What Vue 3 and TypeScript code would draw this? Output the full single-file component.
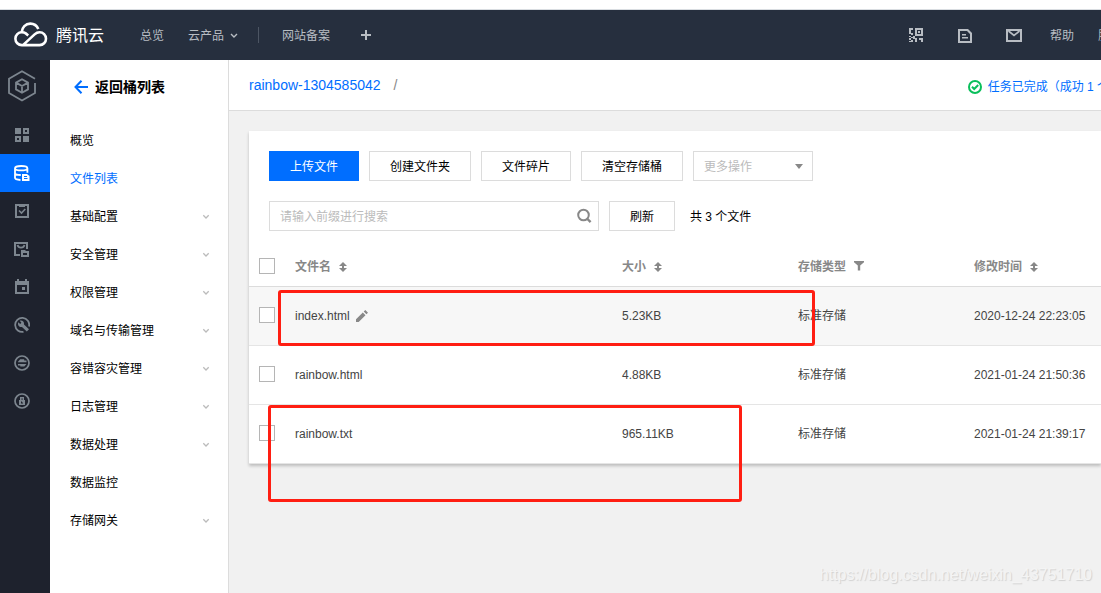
<script setup lang="ts">
import { ref } from 'vue'

interface Glyph {
  name: string
  fill?: string
  stroke?: string
  width?: number
}

interface MenuItem {
  label: string
  expandable: boolean
}

interface FileRow {
  name: string
  size: string
  type: string
  time: string
}

const railIcons: Glyph[] = [
  {
    name: '总览',
    fill: 'M1 1h6v6H1zM9 1h6v6H9zM11 3v2h2V3zM1 9h6v6H1zM3 11v2h2v-2zM9 9h6v6H9z',
  },
  {
    name: '存储桶列表',
    fill: 'M8 9h5l2.500 2v5H8zM10 11v1h3v-1zM10 13v1h3.500v-1z',
    stroke: 'M1 3.200C1 1.800 3.700 1 7.200 1s6.200.8 6.200 2.200S10.700 5.400 7.200 5.400 1 4.600 1 3.200zM1 3.200v9.600c0 1.200 2.200 2 5.500 2.200M13.400 3.200v4.600M1 8c0 1.200 2.500 2 5.800 2',
    width: 1.8,
  },
  {
    name: '任务',
    fill: 'M1 1h14v14H1zM3 3v10h10V3h-2v1H5V3z',
    stroke: 'M5 7.500l2.500 2.500 3.800-4',
    width: 1.6,
  },
  {
    name: '数据迁移',
    fill: 'M0 1h14v7h-2V3H2v10h4v2H0zM7 9h4l1 1h3v6H7zM9 12v2h4v-2z',
    stroke: 'M3.500 4c1 3.400 6 3.400 7 0',
    width: 1.8,
  },
  {
    name: '计划',
    fill: 'M3 0h2v2h6V0h2v2h2v13H1V2h2zM3 6v7h10V6zM8 8h3v3H8z',
  },
  {
    name: '工具',
    fill: 'M4.200 5.200l2 1.700 1.200-1.200L5.800 3.800c2-.8 4.800.7 4.200 3.800l5 4.600-2.200 2.400-4.800-4.600C5.500 10.600 3.300 8.400 4.200 5.200z',
    stroke: 'M9.500 14.800A7 7 0 1 1 15 9.500',
    width: 1.8,
  },
  {
    name: '传输',
    fill: 'M4 6.800L6.200 4.200h4V5.600h2.300v1.600H4zM4 9h8.500l-2.200 2.600h-4v-1.200H4z',
    stroke: 'M8 1a7 7 0 1 0 0 14A7 7 0 0 0 8 1z',
    width: 1.7,
  },
  {
    name: '授权',
    fill: 'M6 4h4v3H8.500V5.300H7.600V7H11v5H5V7h1zM7 8.500V10.500h2v-1H8v-1z',
    stroke: 'M8 1a7 7 0 1 0 0 14A7 7 0 0 0 8 1z',
    width: 1.7,
  },
]
const activeRail = 1

const menu: MenuItem[] = [
  { label: '概览', expandable: false },
  { label: '文件列表', expandable: false },
  { label: '基础配置', expandable: true },
  { label: '安全管理', expandable: true },
  { label: '权限管理', expandable: true },
  { label: '域名与传输管理', expandable: true },
  { label: '容错容灾管理', expandable: true },
  { label: '日志管理', expandable: true },
  { label: '数据处理', expandable: true },
  { label: '数据监控', expandable: false },
  { label: '存储网关', expandable: true },
]
const activeMenu = '文件列表'

const files: FileRow[] = [
  { name: 'index.html', size: '5.23KB', type: '标准存储', time: '2020-12-24 22:23:05' },
  { name: 'rainbow.html', size: '4.88KB', type: '标准存储', time: '2021-01-24 21:50:36' },
  { name: 'rainbow.txt', size: '965.11KB', type: '标准存储', time: '2021-01-24 21:39:17' },
]

const keyword = ref('')
const selected = ref<string[]>([])

function toggleAll(event: Event) {
  const on = (event.target as HTMLInputElement).checked
  selected.value = on ? files.map((f) => f.name) : []
}
</script>

<template>
  <div class="page">
    <header class="topbar">
      <a class="brand" href="#">
        <svg width="34" height="26" viewBox="0 0 34 26" fill="none" stroke="#fff" stroke-width="2.6">
          <path d="M14.200 13.400l-2.400-2C10.600 10.600 9.200 10.300 7.800 10.300a6.400 6.400 0 0 0 0 12.800H25.600a6.400 6.400 0 0 0 0-12.800c-2 0-3.600.8-5 2.100L9.500 22.600" />
          <path d="M7.600 10.400C8 5.300 11.600 1.600 16.300 1.600c3.600 0 6.600 2 8 5.400" />
        </svg>
        <span>腾讯云</span>
      </a>
      <nav class="topnav">
        <a href="#">总览</a>
        <a class="products" href="#">
          云产品
          <svg width="8" height="6" viewBox="0 0 8 6" fill="none" stroke="currentColor" stroke-width="1.400"><path d="M1 1l3 3 3-3" /></svg>
        </a>
        <span class="divider"></span>
        <a href="#">网站备案</a>
        <button class="plain add" type="button" aria-label="添加">
          <svg width="12" height="12" viewBox="0 0 12 12" fill="currentColor"><path d="M5 1h2v4h4v2H7v4H5V7H1V5h4z" /></svg>
        </button>
      </nav>
      <div class="tools">
        <button class="plain" type="button" aria-label="二维码">
          <svg width="16" height="16" viewBox="0 0 16 16" fill="currentColor" fill-rule="evenodd">
            <path d="M1 1h4v2H3v2H1zM1 5h2v1h2v2H3V7H1zM7 1h8v8H7zM9 3v4h4V3zM10 4h2v2h-2zM1 9h2v1H1zM3 10h2v1H3zM5 9h2v2h2v2H7v-1H5zM1 11h2v2H1zM3 13h2v2H1v-1h2zM7 13h2v2H7zM11 11h4v4h-2v-2h-2z" />
          </svg>
        </button>
        <button class="plain" type="button" aria-label="文档">
          <svg width="16" height="16" viewBox="0 0 16 16" fill="currentColor" fill-rule="evenodd">
            <path d="M1 2h10l4 4v10H1zM3 4v10h10V7l-3-3zM5 7h4v1.500H5zM5 10h6v1.500H5z" />
          </svg>
        </button>
        <button class="plain" type="button" aria-label="消息">
          <svg width="16" height="16" viewBox="0 0 16 16" fill="none" stroke="currentColor" stroke-width="2">
            <path d="M1 3h14v11H1z" />
            <path d="M2.500 4L8 8.500 13.500 4" stroke-width="1.700" />
          </svg>
        </button>
        <nav class="help">
          <a href="#">帮助</a>
          <a href="#">服务</a>
        </nav>
      </div>
    </header>

    <div class="body">
      <nav class="rail">
        <a class="rail-logo" href="#" aria-label="对象存储">
          <svg width="30" height="32" viewBox="0 0 30 32" fill="none" stroke="currentColor" stroke-width="1.800">
            <path d="M28 13v10l-13 7.500L2 23V8.800L15 1.200l13 7.500" />
            <path d="M15 9.200l6 3.400v6.800l-6 3.400-6-3.400v-6.800zM9 12.600l6 3.400 6-3.400M15 16v6.800" />
          </svg>
        </a>
        <a
          v-for="(icon, i) in railIcons"
          :key="icon.name"
          class="rail-item"
          :class="{ active: i === activeRail }"
          href="#"
          :aria-label="icon.name"
        >
          <svg width="16" height="16" viewBox="0 0 16 16">
            <path v-if="icon.fill" :d="icon.fill" fill="currentColor" fill-rule="evenodd" />
            <path v-if="icon.stroke" :d="icon.stroke" fill="none" stroke="currentColor" :stroke-width="icon.width" />
          </svg>
        </a>
      </nav>

      <aside class="sidebar">
        <a class="back" href="#">
          <svg width="14" height="14" viewBox="0 0 14 14" fill="none" stroke="#006eff" stroke-width="2"><path d="M7.500.8L1.500 7l6 6.200M1.500 7H14" /></svg>
          <span>返回桶列表</span>
        </a>
        <ul class="menu">
          <li v-for="item in menu" :key="item.label">
            <a href="#" :class="{ current: item.label === activeMenu }">
              {{ item.label }}
              <svg v-if="item.expandable" width="8" height="6" viewBox="0 0 8 6" fill="none" stroke="#bbb" stroke-width="1.300"><path d="M1.300 1.300L4 4l2.700-2.700" /></svg>
            </a>
          </li>
        </ul>
      </aside>

      <main class="main">
        <div class="crumbs">
          <a class="bucket" href="#">rainbow-1304585042</a>
          <span class="slash">/</span>
          <a class="status" href="#">
            <svg width="14" height="14" viewBox="0 0 14 14" fill="none" stroke="#0abf5b" stroke-width="2"><circle cx="7" cy="7" r="6" /><path d="M4 6.800l2.200 2.200 4-4" /></svg>
            <span>任务已完成（成功 1 个）</span>
          </a>
        </div>

        <section class="card">
          <div class="toolbar">
            <button class="btn primary" type="button">上传文件</button>
            <button class="btn" type="button">创建文件夹</button>
            <button class="btn" type="button">文件碎片</button>
            <button class="btn" type="button">清空存储桶</button>
            <div class="select">
              <select aria-label="更多操作">
                <option>更多操作</option>
              </select>
              <svg width="8" height="5" viewBox="0 0 8 5" fill="#888"><path d="M0 0h8L4 5z" /></svg>
            </div>
          </div>
          <div class="toolbar">
            <div class="search">
              <input v-model="keyword" type="text" placeholder="请输入前缀进行搜索" aria-label="搜索文件" />
              <button class="plain" type="button" aria-label="搜索">
                <svg width="16" height="16" viewBox="0 0 16 16" fill="none" stroke="#888" stroke-width="2"><circle cx="7.500" cy="7" r="5.300" /><path d="M11 10.500l3.600 3.600" stroke-width="2.400" /></svg>
              </button>
            </div>
            <button class="btn" type="button">刷新</button>
            <span class="count">共 3 个文件</span>
          </div>

          <table class="files">
            <colgroup>
              <col class="c-check" />
              <col />
              <col class="c-mid" />
              <col class="c-mid" />
              <col class="c-time" />
            </colgroup>
            <thead>
              <tr>
                <th class="check"><input type="checkbox" aria-label="全选" :checked="selected.length === files.length" @change="toggleAll" /></th>
                <th>
                  <span class="cell">文件名
                    <svg width="8" height="10" viewBox="0 0 8 10" fill="#888"><path d="M4 0l4 4H5v2h3l-4 4-4-4h3V4H0z" /></svg>
                  </span>
                </th>
                <th>
                  <span class="cell">大小
                    <svg width="8" height="10" viewBox="0 0 8 10" fill="#888"><path d="M4 0l4 4H5v2h3l-4 4-4-4h3V4H0z" /></svg>
                  </span>
                </th>
                <th>
                  <span class="cell">存储类型
                    <svg width="10" height="12" viewBox="0 0 10 12" fill="#888"><path d="M0 0h10v1.200L6.200 4.500V9.500H3.800v-5L0 1.200z" /></svg>
                  </span>
                </th>
                <th>
                  <span class="cell">修改时间
                    <svg width="8" height="10" viewBox="0 0 8 10" fill="#888"><path d="M4 0l4 4H5v2h3l-4 4-4-4h3V4H0z" /></svg>
                  </span>
                </th>
              </tr>
            </thead>
            <tbody>
              <tr v-for="(file, i) in files" :key="file.name" :class="{ hovered: i === 0 }">
                <td class="check"><input v-model="selected" type="checkbox" :value="file.name" :aria-label="file.name" /></td>
                <td>
                  <span class="cell name">{{ file.name }}
                    <button v-if="i === 0" class="plain" type="button" aria-label="重命名">
                      <svg width="12" height="12" viewBox="0 0 12 12" fill="#888"><path d="M0 9.300L6.800 2.500l2.700 2.700L2.700 12H0zM7.700 1.600L9.300 0 12 2.700l-1.600 1.600z" /></svg>
                    </button>
                  </span>
                </td>
                <td>{{ file.size }}</td>
                <td>{{ file.type }}</td>
                <td>{{ file.time }}</td>
              </tr>
            </tbody>
          </table>

          <div class="mark mark-first"></div>
          <div class="mark mark-last"></div>
        </section>
      </main>
    </div>

    <div class="watermark">https://blog.csdn.net/weixin_43751710</div>
  </div>
</template>

<style>
body {
  margin: 0;
}
</style>

<style scoped>
.page {
  position: relative;
  display: flex;
  flex-direction: column;
  box-sizing: border-box;
  min-height: 100vh;
  padding-top: 9px;
  overflow: hidden;
  background: #fff;
  color: #000;
  font: 12px/18px "Liberation Sans", "Noto Sans CJK SC", sans-serif;
}

a {
  color: inherit;
  text-decoration: none;
}

svg {
  display: block;
  flex: none;
}

button,
input,
select {
  box-sizing: border-box;
  margin: 0;
  font: inherit;
}

.plain {
  padding: 0;
  border: 0;
  background: none;
  color: inherit;
}

/* top bar */
.topbar {
  display: flex;
  align-items: center;
  height: 50px;
  padding-left: 14px;
  overflow: hidden;
  border-top: 1px solid #d9dde1;
  background: #262f3e;
  color: #b8bdc3;
  white-space: nowrap;
}

.brand {
  display: flex;
  align-items: center;
  gap: 8px;
  color: #fff;
  font-size: 16px;
  line-height: 24px;
}

.brand span,
.topnav a,
.help a {
  padding-top: 2px;
}

.topnav {
  display: flex;
  align-items: center;
  gap: 24px;
  margin-left: 36px;
}

.products {
  display: flex;
  align-items: center;
  gap: 6px;
}

.divider {
  width: 1px;
  height: 16px;
  margin: 0 -1px 0 -4px;
  background: #4c5563;
}

.add {
  margin-left: 6px;
}

.tools {
  display: flex;
  align-items: center;
  gap: 33px;
  margin-left: auto;
  margin-right: -21px;
}

.help {
  display: flex;
  gap: 24px;
  margin-left: -5px;
}

/* page columns */
.body {
  display: flex;
  flex: 1;
}

.rail {
  flex: none;
  width: 50px;
  background: #1e222d;
  color: #7d868f;
}

.rail-logo {
  display: flex;
  box-sizing: border-box;
  height: 56px;
  padding: 10px 0 0 7px;
}

.rail-item {
  display: flex;
  align-items: center;
  height: 38px;
  padding-left: 14px;
}

.rail-item.active {
  background: #006eff;
  color: #fff;
}

.sidebar {
  flex: none;
  width: 178px;
  border-right: 1px solid #dcdcdc;
  background: #fff;
}

.back {
  display: flex;
  align-items: center;
  gap: 7px;
  height: 54px;
  padding-left: 24px;
  font-size: 14px;
  font-weight: 700;
}

.menu {
  margin: 0;
  padding: 8px 0 0;
  list-style: none;
}

.menu a {
  display: flex;
  align-items: center;
  justify-content: space-between;
  height: 38px;
  padding: 0 18px 0 20px;
}

.menu .current {
  color: #006eff;
}

.main {
  flex: 1;
  min-width: 0;
  background: #f1f1f1;
}

.crumbs {
  display: flex;
  align-items: center;
  height: 50px;
  padding-left: 20px;
  overflow: hidden;
  border-bottom: 1px solid #dcdcdc;
  background: #fff;
  white-space: nowrap;
}

.bucket {
  color: #006eff;
  font-size: 14px;
}

.slash {
  margin-left: 13px;
  color: #888;
  font-size: 14px;
}

.status {
  display: flex;
  align-items: center;
  gap: 6px;
  margin-left: auto;
  margin-right: -20px;
  padding-top: 4px;
  color: #006eff;
}

/* file card */
.card {
  position: relative;
  margin: 20px 0 0 20px;
  padding-top: 20px;
  background: #fff;
  box-shadow: 0 2px 3px rgba(0, 0, 0, 0.22);
}

.toolbar {
  display: flex;
  align-items: center;
  gap: 10px;
  margin-bottom: 20px;
  padding-left: 20px;
}

.btn {
  height: 30px;
  padding: 2px 20px 0;
  border: 1px solid #dcdcdc;
  background: #fff;
  color: #000;
  white-space: nowrap;
}

.btn.primary {
  border-color: #006eff;
  background: #006eff;
  color: #fff;
}

.select {
  display: flex;
  align-items: center;
  box-sizing: border-box;
  width: 120px;
  height: 30px;
  padding-right: 9px;
  border: 1px solid #dcdcdc;
}

.select select {
  flex: 1;
  min-width: 0;
  height: 28px;
  padding: 2px 0 0 10px;
  border: 0;
  appearance: none;
  background: none;
  color: #bbb;
}

.search {
  display: flex;
  align-items: center;
  box-sizing: border-box;
  width: 330px;
  height: 30px;
  padding-right: 6px;
  border: 1px solid #dcdcdc;
}

.search input {
  flex: 1;
  min-width: 0;
  height: 28px;
  padding: 2px 10px 0;
  border: 0;
  outline: 0;
  background: none;
}

.search input::placeholder {
  color: #bbb;
  opacity: 1;
}

.count {
  margin-left: 5px;
  padding-top: 2px;
}

.files {
  width: 100%;
  margin-top: -4px;
  border-collapse: separate;
  border-spacing: 0;
  table-layout: fixed;
  color: #444;
}

.c-check {
  width: 36px;
}

.c-mid {
  width: 176px;
}

.c-time {
  width: 137px;
}

.files th,
.files td {
  box-sizing: border-box;
  height: 59px;
  padding: 0 10px;
  border-bottom: 1px solid #e5e5e5;
  text-align: left;
  white-space: nowrap;
}

.files th {
  height: 40px;
  border-bottom-color: #dcdcdc;
  color: #888;
  font-weight: 700;
}

.files .check {
  padding-bottom: 2px;
}

.hovered td {
  background: #f7f7f7;
}

.files input {
  display: block;
  width: 16px;
  height: 16px;
  border: 1px solid #b5b5b5;
  border-radius: 0;
  appearance: none;
  background: #fff;
}

.files input:checked {
  border-color: #006eff;
  background: #006eff;
}

.cell {
  display: flex;
  align-items: center;
  gap: 8px;
}

.cell.name {
  gap: 6px;
}

/* highlight frames drawn over the rows */
.mark {
  position: absolute;
  box-sizing: border-box;
  border: 3px solid #ff1e12;
  border-radius: 3px;
  pointer-events: none;
}

.mark-first {
  top: 159px;
  left: 29px;
  width: 537px;
  height: 56px;
}

.mark-last {
  top: 274px;
  left: 19px;
  width: 474px;
  height: 97px;
}

.watermark {
  position: absolute;
  right: 9px;
  bottom: 8px;
  color: #f4f4f4;
  font-size: 16px;
  line-height: 20px;
  text-shadow: 1px 1px 1px #d0d0d0;
  pointer-events: none;
}
</style>
